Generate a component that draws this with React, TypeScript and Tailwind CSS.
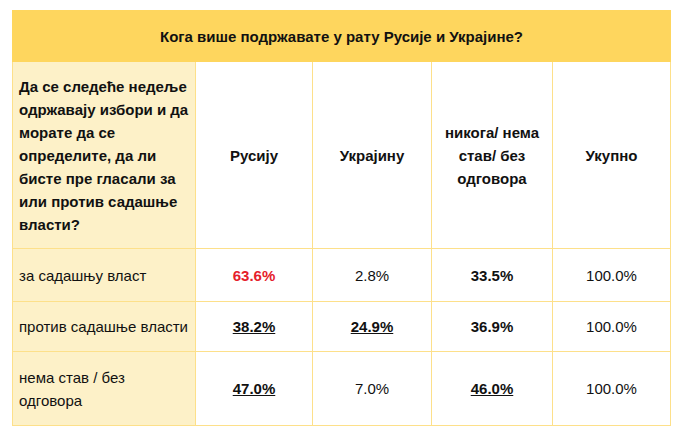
const rows = [
  {
    label: 'за садашњу власт',
    cells: [
      { v: '63.6%', s: 'font-bold text-[#e5202b]' },
      { v: '2.8%', s: '' },
      { v: '33.5%', s: 'font-bold' },
      { v: '100.0%', s: '' },
    ],
    h: 'h-[53px]',
  },
  {
    label: 'против садашње власти',
    cells: [
      { v: '38.2%', s: 'font-bold underline' },
      { v: '24.9%', s: 'font-bold underline' },
      { v: '36.9%', s: 'font-bold' },
      { v: '100.0%', s: '' },
    ],
    h: 'h-[50px]',
  },
  {
    label: 'нема став / без одговора',
    cells: [
      { v: '47.0%', s: 'font-bold underline' },
      { v: '7.0%', s: '' },
      { v: '46.0%', s: 'font-bold underline' },
      { v: '100.0%', s: '' },
    ],
    h: 'h-[74px]',
  },
];

export default function App() {
  return (
    <div className="w-[680px] h-[434px] bg-white pt-[10px] pl-[12px] font-['Liberation_Sans',Arial,sans-serif] text-[15px] leading-[23px] text-[#111]">
      <table className="w-[658px] border-collapse table-fixed">
        <colgroup>
          <col className="w-[183px]" />
          <col className="w-[117px]" />
          <col className="w-[119px]" />
          <col className="w-[121px]" />
          <col className="w-[118px]" />
        </colgroup>
        <tbody>
          <tr className="h-[51px]">
            <td
              colSpan={5}
              className="bg-[#fed65e] border border-[#fed65e] text-center font-bold"
            >
              Кога више подржавате у рату Русије и Украјине?
            </td>
          </tr>
          <tr className="h-[187px]">
            <td className="bg-[#fdf1c8] border border-[#fde08a] px-[6px] font-bold align-middle">
              Да се следеће недеље одржавају избори и да морате да се определите, да ли бисте пре гласали за или против садашње власти?
            </td>
            <td className="border border-[#fde08a] text-center font-bold">Русију</td>
            <td className="border border-[#fde08a] text-center font-bold">Украјину</td>
            <td className="border border-[#fde08a] text-center font-bold px-[10px]">
              никога/ нема став/ без одговора
            </td>
            <td className="border border-[#fde08a] text-center font-bold">Укупно</td>
          </tr>
          {rows.map((r) => (
            <tr key={r.label} className={r.h}>
              <td className="bg-[#fdf1c8] border border-[#fde08a] px-[6px]">{r.label}</td>
              {r.cells.map((c, i) => (
                <td key={i} className="border border-[#fde08a] text-center">
                  <span className={c.s}>{c.v}</span>
                </td>
              ))}
            </tr>
          ))}
        </tbody>
      </table>
    </div>
  );
}
